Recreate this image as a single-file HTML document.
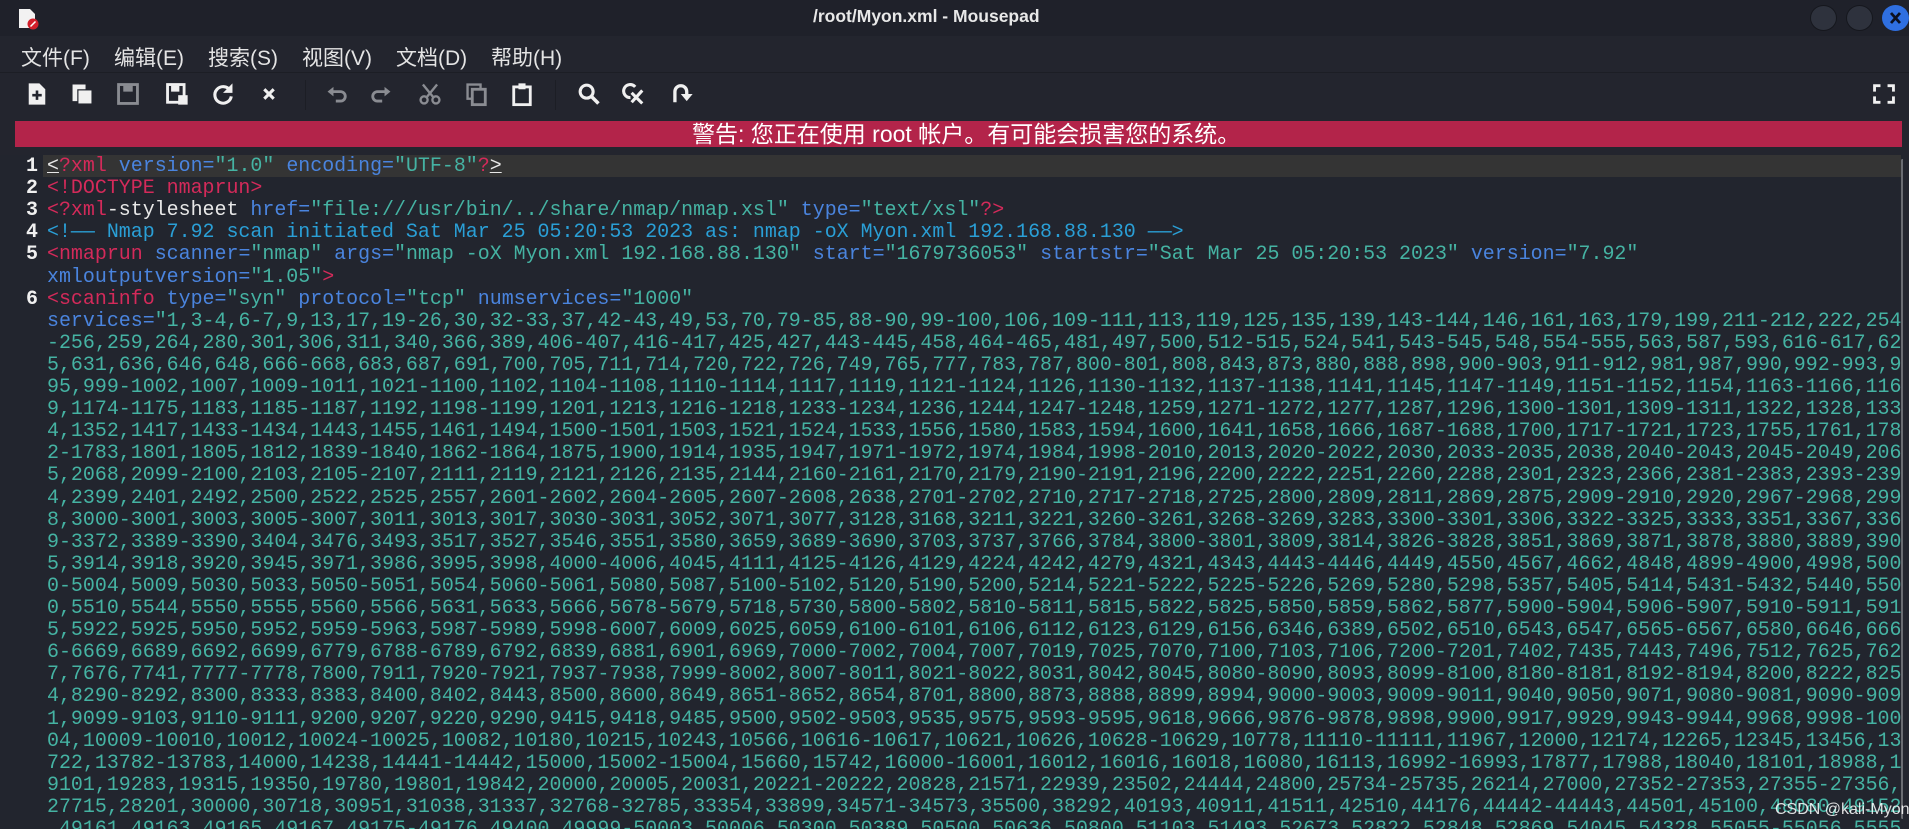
<!DOCTYPE html>
<html><head><meta charset="utf-8">
<style>
html,body{margin:0;padding:0}
body{width:1909px;height:829px;background:#23252e;position:relative;overflow:hidden;font-family:"Liberation Sans","Noto Sans CJK SC",sans-serif;color:#e6e6e6}
.title{position:absolute;left:0;top:0;width:1909px;height:36px;background:#1f212a}
.title .t{position:absolute;left:813px;top:6px;font-weight:bold;font-size:17.5px;color:#e8e8e8}
.btn{position:absolute;top:5px;width:25px;height:24px;border-radius:50%;background:#2e323d;border:1px solid #15171d}
.menu{position:absolute;top:42px;font-size:21px;color:#e4e4e4;white-space:nowrap}
.ic{position:absolute;top:81px}
.warn{position:absolute;left:15px;top:121px;width:1887px;height:26px;background:#b3244a;}
.warn span{position:absolute;left:677px;top:0;color:#fff;font-size:23px;line-height:26px;white-space:nowrap}
.ed{position:absolute;left:0;top:155px;width:1903px;height:674px;background:#22252e;overflow:hidden;font-family:"Liberation Mono",monospace;font-size:19.95px;}
.row{position:absolute;left:47px;height:22px;line-height:22px;white-space:pre;color:#45b3a3}
.ln{position:absolute;left:0;width:38px;text-align:right;color:#f0f0f0;font-weight:bold;line-height:22px;height:22px}
.r{color:#d42a5a}.b{color:#4a84de}.g{color:#45b3a3}.w{color:#e8e8e8}.c{color:#2a9fd6}
</style></head><body>
<div class="title">
<svg style="position:absolute;left:18px;top:8px" width="22" height="22"><path d="M1 1h11l5 5v14H1z" fill="#f2f2f2"/><circle cx="15" cy="16" r="5.5" fill="#d21f2a"/><path d="M12.5 18.5l5-5" stroke="#fff" stroke-width="1.5"/></svg>
<div class="t">/root/Myon.xml - Mousepad</div>
<div class="btn" style="left:1810px"></div><div class="btn" style="left:1846px"></div>
<div class="btn" style="left:1882px;background:#2f6fe0;border-color:#2f6fe0"><svg width="25" height="24"><path d="M8 7l9 10M17 7l-9 10" stroke="#0b1020" stroke-width="2.8"/></svg></div>
</div>
<div class="menu" style="left:21px">文件(F)</div>
<div class="menu" style="left:114px">编辑(E)</div>
<div class="menu" style="left:208px">搜索(S)</div>
<div class="menu" style="left:302px">视图(V)</div>
<div class="menu" style="left:396px">文档(D)</div>
<div class="menu" style="left:491px">帮助(H)</div>
<div style="position:absolute;left:0;top:72px;width:1909px;height:1px;background:#1c1e25"></div>
<svg class="ic" style="left:24px" width="26" height="26" viewBox="0 0 22 22"><path d="M4 2h9l5 5v13H4z" fill="#f0f0f0"/><path d="M11 8v8M7 12h8" stroke="#23252e" stroke-width="2.2"/></svg>
<svg class="ic" style="left:69px" width="26" height="26" viewBox="0 0 22 22"><path d="M3 3h11v4H7v10H3z" fill="#f0f0f0"/><rect x="8" y="8" width="11" height="11" fill="#f0f0f0"/></svg>
<svg class="ic" style="left:115px" width="26" height="26" viewBox="0 0 22 22"><rect x="3" y="3" width="16" height="16" fill="none" stroke="#8a8c92" stroke-width="2.4"/><rect x="7" y="4" width="8" height="5" fill="#8a8c92"/></svg>
<svg class="ic" style="left:164px" width="26" height="26" viewBox="0 0 22 22"><rect x="3" y="3" width="14" height="15" fill="none" stroke="#f0f0f0" stroke-width="2.4"/><rect x="6" y="4" width="7" height="5" fill="#f0f0f0"/><rect x="12" y="12" width="8" height="8" fill="#f0f0f0"/></svg>
<svg class="ic" style="left:210px" width="26" height="26" viewBox="0 0 22 22"><path d="M17 8A7 7 0 1 0 18 13" fill="none" stroke="#f0f0f0" stroke-width="2.6"/><path d="M19 2v8h-8z" fill="#f0f0f0"/></svg>
<svg class="ic" style="left:256px" width="26" height="26" viewBox="0 0 22 22"><path d="M7 7l8 8M15 7l-8 8" stroke="#f0f0f0" stroke-width="2.6"/></svg>
<div style="position:absolute;left:305px;top:80px;width:1px;height:30px;background:#1c1e25"></div>
<svg class="ic" style="left:324px" width="26" height="26" viewBox="0 0 22 22"><path d="M6 9h8a4 4 0 0 1 0 8h-4" fill="none" stroke="#8a8c92" stroke-width="2.4"/><path d="M3 9l5-4v8z" fill="#8a8c92"/></svg>
<svg class="ic" style="left:368px" width="26" height="26" viewBox="0 0 22 22"><path d="M16 9H8a4 4 0 0 0 0 8h4" fill="none" stroke="#8a8c92" stroke-width="2.4"/><path d="M19 9l-5-4v8z" fill="#8a8c92"/></svg>
<svg class="ic" style="left:417px" width="26" height="26" viewBox="0 0 22 22"><circle cx="6" cy="16" r="3" fill="none" stroke="#8a8c92" stroke-width="2"/><circle cx="16" cy="16" r="3" fill="none" stroke="#8a8c92" stroke-width="2"/><path d="M8 14L17 3M14 14L5 3" stroke="#8a8c92" stroke-width="2"/></svg>
<svg class="ic" style="left:464px" width="26" height="26" viewBox="0 0 22 22"><rect x="3" y="3" width="11" height="12" fill="none" stroke="#8a8c92" stroke-width="2"/><rect x="7" y="7" width="11" height="13" fill="#23252e" stroke="#8a8c92" stroke-width="2.4"/></svg>
<svg class="ic" style="left:509px" width="26" height="26" viewBox="0 0 22 22"><rect x="4" y="5" width="14" height="15" fill="none" stroke="#f0f0f0" stroke-width="2.4"/><rect x="8" y="2" width="6" height="5" fill="#f0f0f0"/></svg>
<div style="position:absolute;left:555px;top:80px;width:1px;height:30px;background:#1c1e25"></div>
<svg class="ic" style="left:576px" width="26" height="26" viewBox="0 0 22 22"><circle cx="9" cy="9" r="5.5" fill="none" stroke="#f0f0f0" stroke-width="2.6"/><path d="M13 13l6 6" stroke="#f0f0f0" stroke-width="3"/></svg>
<svg class="ic" style="left:621px" width="26" height="26" viewBox="0 0 22 22"><path d="M12 5A5.5 5.5 0 1 0 8 14" fill="none" stroke="#f0f0f0" stroke-width="2.6"/><path d="M9 10l9 9M18 8l-9 10" stroke="#f0f0f0" stroke-width="2.6"/></svg>
<svg class="ic" style="left:669px" width="26" height="26" viewBox="0 0 22 22"><path d="M5 18V9a5 5 0 0 1 10 0v3" fill="none" stroke="#f0f0f0" stroke-width="2.8"/><path d="M10 11h10l-5 6z" fill="#f0f0f0"/></svg>
<svg class="ic" style="left:1871px" width="26" height="26" viewBox="0 0 22 22"><path d="M3 9V4h5M14 4h5v5M19 13v5h-5M8 18H3v-5" fill="none" stroke="#f0f0f0" stroke-width="2.4"/></svg>
<div class="warn"><span>警告: 您正在使用 root 帐户。有可能会损害您的系统。</span></div>
<div class="ed">
<div style="position:absolute;left:43px;top:0;width:1858px;height:22px;background:#343434"></div>
<div style="position:absolute;left:1901px;top:4px;width:3px;height:660px;background:#6a6c72;border-radius:2px"></div>
<div class="ln" style="top:0">1</div><div class="ln" style="top:22.1px">2</div><div class="ln" style="top:44.2px">3</div><div class="ln" style="top:66.3px">4</div><div class="ln" style="top:88.4px">5</div><div class="ln" style="top:132.6px">6</div>
<div class="row" style="top:0"><span class="w" style="text-decoration:underline">&lt;</span><span class="r">?xml</span> <span class="b">version=</span><span class="g">"1.0"</span> <span class="b">encoding=</span><span class="g">"UTF-8"</span><span class="r">?</span><span class="w" style="text-decoration:underline">&gt;</span></div>
<div class="row r" style="top:22.1px">&lt;!DOCTYPE nmaprun&gt;</div>
<div class="row" style="top:44.2px"><span class="r">&lt;?xml</span><span class="w">-stylesheet</span> <span class="b">href=</span><span class="g">"file:///usr/bin/../share/nmap/nmap.xsl"</span> <span class="b">type=</span><span class="g">"text/xsl"</span><span class="r">?&gt;</span></div>
<div class="row c" style="top:66.3px">&lt;!—— Nmap 7.92 scan initiated Sat Mar 25 05:20:53 2023 as: nmap -oX Myon.xml 192.168.88.130 ——&gt;</div>
<div class="row" style="top:88.4px"><span class="r">&lt;nmaprun</span> <span class="b">scanner=</span><span class="g">"nmap"</span> <span class="b">args=</span><span class="g">"nmap -oX Myon.xml 192.168.88.130"</span> <span class="b">start=</span><span class="g">"1679736053"</span> <span class="b">startstr=</span><span class="g">"Sat Mar 25 05:20:53 2023"</span> <span class="b">version=</span><span class="g">"7.92"</span></div>
<div class="row" style="top:110.5px"><span class="b">xmloutputversion=</span><span class="g">"1.05"</span><span class="r">&gt;</span></div>
<div class="row" style="top:132.6px"><span class="r">&lt;scaninfo</span> <span class="b">type=</span><span class="g">"syn"</span> <span class="b">protocol=</span><span class="g">"tcp"</span> <span class="b">numservices=</span><span class="g">"1000"</span></div>
<div class="row" style="top:154.7px"><span class="b">services=</span>"1,3-4,6-7,9,13,17,19-26,30,32-33,37,42-43,49,53,70,79-85,88-90,99-100,106,109-111,113,119,125,135,139,143-144,146,161,163,179,199,211-212,222,254</div>
<div class="row" style="top:176.8px">-256,259,264,280,301,306,311,340,366,389,406-407,416-417,425,427,443-445,458,464-465,481,497,500,512-515,524,541,543-545,548,554-555,563,587,593,616-617,62</div>
<div class="row" style="top:198.9px">5,631,636,646,648,666-668,683,687,691,700,705,711,714,720,722,726,749,765,777,783,787,800-801,808,843,873,880,888,898,900-903,911-912,981,987,990,992-993,9</div>
<div class="row" style="top:221px">95,999-1002,1007,1009-1011,1021-1100,1102,1104-1108,1110-1114,1117,1119,1121-1124,1126,1130-1132,1137-1138,1141,1145,1147-1149,1151-1152,1154,1163-1166,116</div>
<div class="row" style="top:243.1px">9,1174-1175,1183,1185-1187,1192,1198-1199,1201,1213,1216-1218,1233-1234,1236,1244,1247-1248,1259,1271-1272,1277,1287,1296,1300-1301,1309-1311,1322,1328,133</div>
<div class="row" style="top:265.2px">4,1352,1417,1433-1434,1443,1455,1461,1494,1500-1501,1503,1521,1524,1533,1556,1580,1583,1594,1600,1641,1658,1666,1687-1688,1700,1717-1721,1723,1755,1761,178</div>
<div class="row" style="top:287.3px">2-1783,1801,1805,1812,1839-1840,1862-1864,1875,1900,1914,1935,1947,1971-1972,1974,1984,1998-2010,2013,2020-2022,2030,2033-2035,2038,2040-2043,2045-2049,206</div>
<div class="row" style="top:309.4px">5,2068,2099-2100,2103,2105-2107,2111,2119,2121,2126,2135,2144,2160-2161,2170,2179,2190-2191,2196,2200,2222,2251,2260,2288,2301,2323,2366,2381-2383,2393-239</div>
<div class="row" style="top:331.5px">4,2399,2401,2492,2500,2522,2525,2557,2601-2602,2604-2605,2607-2608,2638,2701-2702,2710,2717-2718,2725,2800,2809,2811,2869,2875,2909-2910,2920,2967-2968,299</div>
<div class="row" style="top:353.6px">8,3000-3001,3003,3005-3007,3011,3013,3017,3030-3031,3052,3071,3077,3128,3168,3211,3221,3260-3261,3268-3269,3283,3300-3301,3306,3322-3325,3333,3351,3367,336</div>
<div class="row" style="top:375.7px">9-3372,3389-3390,3404,3476,3493,3517,3527,3546,3551,3580,3659,3689-3690,3703,3737,3766,3784,3800-3801,3809,3814,3826-3828,3851,3869,3871,3878,3880,3889,390</div>
<div class="row" style="top:397.8px">5,3914,3918,3920,3945,3971,3986,3995,3998,4000-4006,4045,4111,4125-4126,4129,4224,4242,4279,4321,4343,4443-4446,4449,4550,4567,4662,4848,4899-4900,4998,500</div>
<div class="row" style="top:419.9px">0-5004,5009,5030,5033,5050-5051,5054,5060-5061,5080,5087,5100-5102,5120,5190,5200,5214,5221-5222,5225-5226,5269,5280,5298,5357,5405,5414,5431-5432,5440,550</div>
<div class="row" style="top:442px">0,5510,5544,5550,5555,5560,5566,5631,5633,5666,5678-5679,5718,5730,5800-5802,5810-5811,5815,5822,5825,5850,5859,5862,5877,5900-5904,5906-5907,5910-5911,591</div>
<div class="row" style="top:464.1px">5,5922,5925,5950,5952,5959-5963,5987-5989,5998-6007,6009,6025,6059,6100-6101,6106,6112,6123,6129,6156,6346,6389,6502,6510,6543,6547,6565-6567,6580,6646,666</div>
<div class="row" style="top:486.2px">6-6669,6689,6692,6699,6779,6788-6789,6792,6839,6881,6901,6969,7000-7002,7004,7007,7019,7025,7070,7100,7103,7106,7200-7201,7402,7435,7443,7496,7512,7625,762</div>
<div class="row" style="top:508.3px">7,7676,7741,7777-7778,7800,7911,7920-7921,7937-7938,7999-8002,8007-8011,8021-8022,8031,8042,8045,8080-8090,8093,8099-8100,8180-8181,8192-8194,8200,8222,825</div>
<div class="row" style="top:530.4px">4,8290-8292,8300,8333,8383,8400,8402,8443,8500,8600,8649,8651-8652,8654,8701,8800,8873,8888,8899,8994,9000-9003,9009-9011,9040,9050,9071,9080-9081,9090-909</div>
<div class="row" style="top:552.5px">1,9099-9103,9110-9111,9200,9207,9220,9290,9415,9418,9485,9500,9502-9503,9535,9575,9593-9595,9618,9666,9876-9878,9898,9900,9917,9929,9943-9944,9968,9998-100</div>
<div class="row" style="top:574.6px">04,10009-10010,10012,10024-10025,10082,10180,10215,10243,10566,10616-10617,10621,10626,10628-10629,10778,11110-11111,11967,12000,12174,12265,12345,13456,13</div>
<div class="row" style="top:596.7px">722,13782-13783,14000,14238,14441-14442,15000,15002-15004,15660,15742,16000-16001,16012,16016,16018,16080,16113,16992-16993,17877,17988,18040,18101,18988,1</div>
<div class="row" style="top:618.8px">9101,19283,19315,19350,19780,19801,19842,20000,20005,20031,20221-20222,20828,21571,22939,23502,24444,24800,25734-25735,26214,27000,27352-27353,27355-27356,</div>
<div class="row" style="top:640.9px">27715,28201,30000,30718,30951,31038,31337,32768-32785,33354,33899,34571-34573,35500,38292,40193,40911,41511,42510,44176,44442-44443,44501,45100,48080,49152</div>
<div class="row" style="top:663px">,49161,49163,49165,49167,49175-49176,49400,49999-50003,50006,50300,50389,50500,50636,50800,51103,51493,52673,52822,52848,52869,54045,54328,55055-55056,5555</div>
</div>
<div style="position:absolute;left:1775px;top:801px;font-size:16px;color:rgba(255,255,255,0.85);white-space:nowrap">CSDN @kali-Myon</div>
</body></html>
